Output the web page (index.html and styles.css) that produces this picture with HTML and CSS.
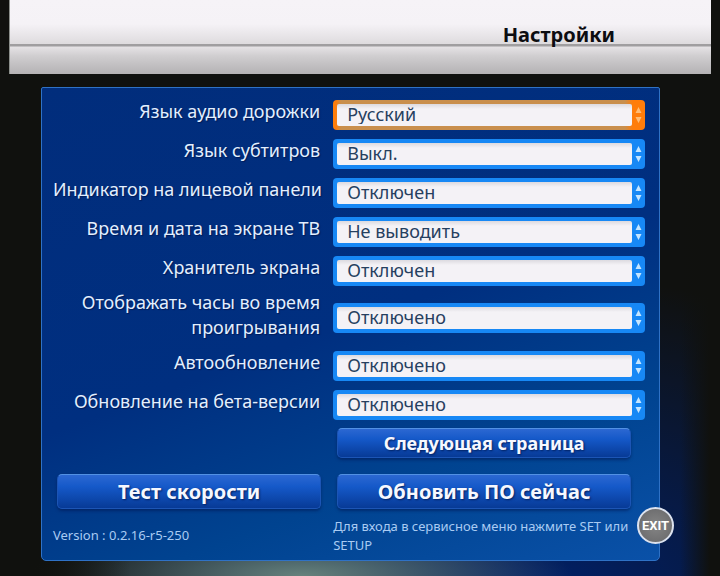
FILE: index.html
```html
<!DOCTYPE html>
<html lang="ru">
<head>
    <meta charset="UTF-8">
    <meta name="viewport" content="width=device-width, initial-scale=1.0">
    <title>Настройки</title>
    <link rel="stylesheet" href="styles.css">
</head>
<body>
    <header class="header">
        <h1>Настройки</h1>
    </header>

    <main class="panel">
        <form class="settings">
            <div class="row">
                <label for="audio">Язык аудио дорожки</label>
                <div class="field active">
                    <select id="audio"><option>Русский</option></select>
                    <svg class="arrows" viewBox="0 0 12 30"><path d="M6 7l3 6H3zM6 23l3-6H3z"/></svg>
                </div>
            </div>
            <div class="row">
                <label for="subtitles">Язык субтитров</label>
                <div class="field">
                    <select id="subtitles"><option>Выкл.</option></select>
                    <svg class="arrows" viewBox="0 0 12 30"><path d="M6 7l3 6H3zM6 23l3-6H3z"/></svg>
                </div>
            </div>
            <div class="row">
                <label for="indicator">Индикатор на лицевой панели</label>
                <div class="field">
                    <select id="indicator"><option>Отключен</option></select>
                    <svg class="arrows" viewBox="0 0 12 30"><path d="M6 7l3 6H3zM6 23l3-6H3z"/></svg>
                </div>
            </div>
            <div class="row">
                <label for="datetime">Время и дата на экране ТВ</label>
                <div class="field">
                    <select id="datetime"><option>Не выводить</option></select>
                    <svg class="arrows" viewBox="0 0 12 30"><path d="M6 7l3 6H3zM6 23l3-6H3z"/></svg>
                </div>
            </div>
            <div class="row">
                <label for="screensaver">Хранитель экрана</label>
                <div class="field">
                    <select id="screensaver"><option>Отключен</option></select>
                    <svg class="arrows" viewBox="0 0 12 30"><path d="M6 7l3 6H3zM6 23l3-6H3z"/></svg>
                </div>
            </div>
            <div class="row">
                <label for="clock">Отображать часы во время<br>проигрывания</label>
                <div class="field">
                    <select id="clock"><option>Отключено</option></select>
                    <svg class="arrows" viewBox="0 0 12 30"><path d="M6 7l3 6H3zM6 23l3-6H3z"/></svg>
                </div>
            </div>
            <div class="row">
                <label for="autoupdate">Автообновление</label>
                <div class="field">
                    <select id="autoupdate"><option>Отключено</option></select>
                    <svg class="arrows" viewBox="0 0 12 30"><path d="M6 7l3 6H3zM6 23l3-6H3z"/></svg>
                </div>
            </div>
            <div class="row">
                <label for="beta">Обновление на бета-версии</label>
                <div class="field">
                    <select id="beta"><option>Отключено</option></select>
                    <svg class="arrows" viewBox="0 0 12 30"><path d="M6 7l3 6H3zM6 23l3-6H3z"/></svg>
                </div>
            </div>
        </form>

        <div class="buttons">
            <button type="button" class="btn next">Следующая страница</button>
            <button type="button" class="btn large">Тест скорости</button>
            <button type="button" class="btn large">Обновить ПО сейчас</button>
        </div>

        <footer class="info">
            <p class="version">Version : 0.2.16-r5-250</p>
            <p>Для входа в сервисное меню нажмите SET или<br>SETUP</p>
        </footer>

        <button type="button" class="exit">EXIT</button>
    </main>
</body>
</html>
```

FILE: styles.css
```css
* {
    font-family: "Noto Sans", "Open Sans", sans-serif;
    margin: 0;
    padding: 0;
    box-sizing: border-box;
}
body {
    min-height: 100vh;
    padding: 0 9px;
    background:
        linear-gradient(to right, #10110e 30px, transparent 130px, transparent calc(100% - 40px), #10110e calc(100% - 10px)),
        radial-gradient(ellipse 270px 60px at 42% 100%, #66827c, transparent),
        radial-gradient(ellipse 480px 330px at 75% 105%, #00206a, transparent),
        #10110f;
}
.header {
    height: 74px;
    padding: 21px 96px 0 20px;
    text-align: right;
    background: linear-gradient(#f6f3f7 0, #f5f2f6 24px, #dedbde 44px, #a09ea0 44px, #a09ea0 46px, #e5e2e5 47px, #d0ced0 56px, #b4b2b4 74px);
    border-left: 1px solid #8c908c;
}
h1 {
    font-size: 20px;
    line-height: 28px;
    color: #0c0c10;
}
.panel {
    position: relative;
    margin: 13px 51px 0 32px;
    padding: 7px 14px 5px 11px;
    background: linear-gradient(160deg, #012d7c 0%, #002f80 50%, #004390 75%, #0a51a8 100%);
    border: 1px solid #2f72c6;
    border-radius: 2px 2px 5px 5px;
}
.row {
    display: grid;
    grid-template-columns: minmax(0, 6fr) minmax(0, 7fr);
    column-gap: 13px;
    align-items: center;
    min-height: 39px;
}
.row label {
    padding-bottom: 6px;
    font-size: 18px;
    line-height: 25px;
    color: #e2efff;
    text-align: right;
    white-space: nowrap;
    text-shadow: 1px 1px 1px #001b58;
}
.field {
    display: grid;
    height: 30px;
    overflow: hidden;
    background: #1788f5;
    border-radius: 4px;
}
.field select {
    grid-area: 1 / 1;
    margin: 4px 13px 4px 4px;
    padding: 0 0 2px 10px;
    appearance: none;
    border: none;
    border-radius: 2px;
    outline: none;
    background: linear-gradient(#dcdadf, #f4f2f6 5px);
    color: #26405f;
    font-size: 18px;
    line-height: 20px;
}
.arrows {
    grid-area: 1 / 1;
    justify-self: end;
    width: 13px;
    height: 30px;
    fill: #c4e5ff;
    pointer-events: none;
}
.active {
    background: linear-gradient(to right, #ff7d0a 3px, #c98f4d 8px, #c98f4d calc(100% - 20px), #ff7d0a calc(100% - 12px));
}
.active .arrows {
    fill: #ffbd75;
}
.buttons {
    display: grid;
    grid-template-columns: 9fr 10fr;
    gap: 16px;
    margin: 4px 14px 0 4px;
}
.btn {
    height: 30px;
    background: linear-gradient(#2c68d2, #1559c9 35%, #073a96);
    border: 1px solid #1c55b5;
    border-top-color: #5291e4;
    border-radius: 5px;
    box-shadow: 0 2px 3px rgba(0, 20, 80, 0.5);
    color: #f6f8ff;
    font-size: 18px;
    font-weight: bold;
    line-height: 26px;
    text-shadow: 1px 1px 2px #002060;
    cursor: pointer;
}
.next {
    grid-column: 2;
}
.large {
    height: 35px;
    font-size: 20px;
}
.info {
    display: grid;
    grid-template-columns: minmax(0, 6fr) minmax(0, 7fr);
    column-gap: 13px;
    margin-top: 8px;
    font-size: 13px;
    line-height: 19px;
    color: #a9cbf3;
    white-space: nowrap;
}
.version {
    padding-top: 9px;
}
/* sits over the corner of the panel */
.exit {
    position: absolute;
    right: -15px;
    bottom: 16px;
    width: 37px;
    height: 37px;
    background: radial-gradient(#858585, #666668);
    border: 2px solid #dce2ee;
    border-radius: 50%;
    color: #fff;
    font-family: Roboto, "Noto Sans", sans-serif;
    font-size: 13px;
    font-weight: bold;
    cursor: pointer;
}
```
